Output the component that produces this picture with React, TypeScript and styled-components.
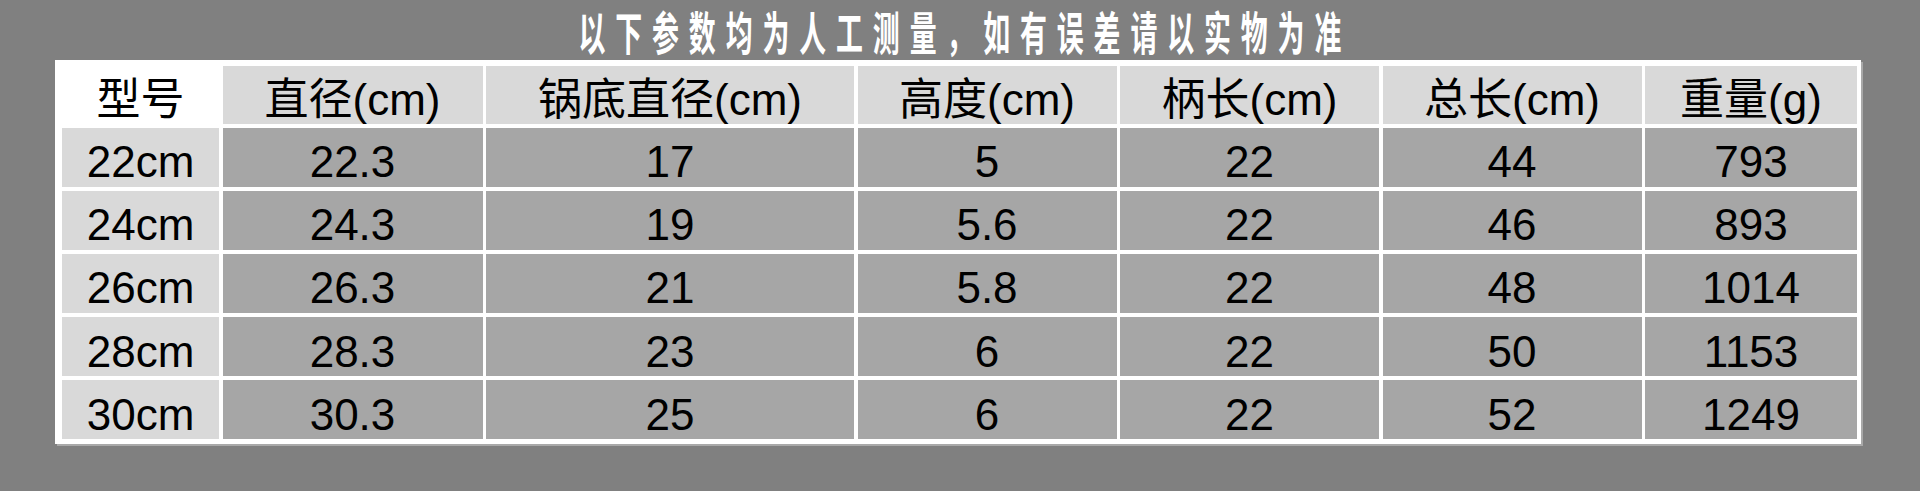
import React from "react";
import styled, { createGlobalStyle } from "styled-components";

const GlobalStyle = createGlobalStyle`
  html, body {
    margin: 0;
    padding: 0;
    background: #808080;
  }
  body {
    width: 1920px;
    height: 491px;
    overflow: hidden;
    font-family: "Liberation Sans", "Noto Sans CJK SC", sans-serif;
  }
`;

const Page = styled.div`
  width: 1920px;
  height: 491px;
  background: #808080;
  display: flex;
  flex-direction: column;
  align-items: center;
`;

const TitleBar = styled.div`
  height: 60px;
  width: 100%;
  display: flex;
  align-items: center;
  justify-content: center;
`;

const TitleText = styled.span`
  display: inline-block;
  white-space: nowrap;
  color: #ffffff;
  font-family: "Noto Sans CJK SC", sans-serif;
  font-weight: 700;
  font-size: 46px;
  line-height: 54px;
  letter-spacing: 16.9px;
  padding-left: 16.9px;
  transform: scaleX(0.585);
  transform-origin: center;
`;

const Sheet = styled.div`
  margin-left: -4px;
  background: #ffffff;
  padding: 6px 4px 5px 7px;
  box-shadow: 2px 2px 0 #a9a9a9;
  display: grid;
  grid-template-columns: 157px 260px 368px 259px 259px 259px 212px;
  grid-template-rows: 58px repeat(5, 59.6px);
  gap: 3.5px;
`;

type Tone = "white" | "light" | "dark";

const toneColor: Record<Tone, string> = {
  white: "#ffffff",
  light: "#d9d9d9",
  dark: "#a6a6a6",
};

const Cell = styled.div<{ $tone: Tone }>`
  background: ${(p) => toneColor[p.$tone]};
  color: #000000;
  font-size: 44px;
  line-height: 44px;
  display: flex;
  align-items: center;
  justify-content: center;
  padding-top: 10px;
  box-sizing: border-box;
  white-space: nowrap;
`;

const headers = ["型号", "直径(cm)", "锅底直径(cm)", "高度(cm)", "柄长(cm)", "总长(cm)", "重量(g)"];

const rows: string[][] = [
  ["22cm", "22.3", "17", "5", "22", "44", "793"],
  ["24cm", "24.3", "19", "5.6", "22", "46", "893"],
  ["26cm", "26.3", "21", "5.8", "22", "48", "1014"],
  ["28cm", "28.3", "23", "6", "22", "50", "1153"],
  ["30cm", "30.3", "25", "6", "22", "52", "1249"],
];

export default function App() {
  return (
    <>
      <GlobalStyle />
      <Page>
        <TitleBar>
          <TitleText>以下参数均为人工测量，如有误差请以实物为准</TitleText>
        </TitleBar>
        <Sheet>
          {headers.map((h, i) => (
            <Cell key={`h${i}`} $tone={i === 0 ? "white" : "light"}>
              {h}
            </Cell>
          ))}
          {rows.map((r, ri) =>
            r.map((v, ci) => (
              <Cell key={`r${ri}c${ci}`} $tone={ci === 0 ? "light" : "dark"}>
                {v}
              </Cell>
            ))
          )}
        </Sheet>
      </Page>
    </>
  );
}
